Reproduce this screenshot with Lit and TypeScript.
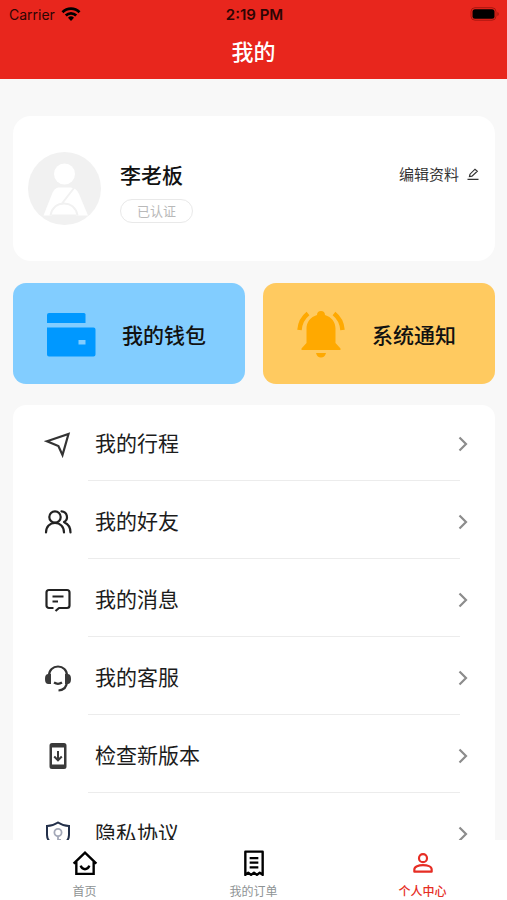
import { LitElement, html, css, svg } from "lit";
import { customElement, state } from "lit/decorators.js";
import { classMap } from "lit/directives/class-map.js";

const menuIcons = {
  trip: svg`<path d="M3 11.200 24.500 4 18.500 25 14.400 16Z" fill="none" stroke="#333" stroke-width="2.200" stroke-linejoin="miter"/>`,
  friends: svg`<g fill="none" stroke="#222" stroke-width="2.200" stroke-linecap="round">
    <circle cx="11" cy="9" r="5.700"/>
    <path d="M2 24.500c0-6 4-9.600 9-9.600s9 3.600 9 9.600"/>
    <path d="M17.500 3.300a5.700 5.700 0 0 1 2.500 10.700M20.500 14.500c3.500 1.500 6 5 6 10"/></g>`,
  message: svg`<path d="M9.500 22H5a2.500 2.500 0 0 1-2.500-2.500V6.500A2.500 2.500 0 0 1 5 4h18a2.500 2.500 0 0 1 2.500 2.500v13A2.500 2.500 0 0 1 23 22h-8l-3.500 3M8.500 10.500h11M8.500 15.500h5.500" fill="none" stroke="#222" stroke-width="2.200" stroke-linejoin="round"/>`,
  service: svg`<path d="M5 11.500C5 6 9 2.500 14 2.500S23 6 23 11.500M23 17c0 6-3 9-8.500 9.500M10 18.500c2.500 1.600 5.500 1.600 8 0" fill="none" stroke="#333" stroke-width="2.200"/>
    <path d="M7 10v10H4.500C2 20 1 18.500 1 15s1-5 3.500-5zM21 10v10h2.500c2.500 0 3.500-1.500 3.500-5s-1-5-3.500-5z" fill="#3a3a3a"/>`,
  update: svg`<path fill-rule="evenodd" d="M8 1h12a2.500 2.500 0 0 1 2.500 2.500v21A2.500 2.500 0 0 1 20 27H8a2.500 2.500 0 0 1-2.500-2.500v-21A2.500 2.500 0 0 1 8 1zM8 5.500v17h12v-17z" fill="#3a3a3a"/>
    <path d="M14 9v9M10.200 14.500 14 18.300l3.800-3.800" fill="none" stroke="#3a3a3a" stroke-width="2"/>`,
  privacy: svg`<path d="M14 2.500c3.500 2.300 7 3.400 11 3.500v9c0 5.500-4 9-11 12-7-3-11-6.500-11-12V6c4-.1 7.500-1.200 11-3.500z" fill="none" stroke="#23304a" stroke-width="2"/>
    <circle cx="14" cy="12.500" r="3.600" fill="none" stroke="#a3a8b8" stroke-width="1.800"/><path d="M14 16v6.500M14 20h3" stroke="#a3a8b8" stroke-width="1.800"/>`,
};

const menu: { label: string; icon: keyof typeof menuIcons }[] = [
  { label: "我的行程", icon: "trip" },
  { label: "我的好友", icon: "friends" },
  { label: "我的消息", icon: "message" },
  { label: "我的客服", icon: "service" },
  { label: "检查新版本", icon: "update" },
  { label: "隐私协议", icon: "privacy" },
];

const tabs = [
  {
    label: "首页",
    icon: svg`<path d="M1.500 12.500 12 2.500l10.500 10M4 10.500V22h16V10.500M8 14.500c.8 2.300 2.200 3.300 4 3.300s3.200-1 4-3.300" fill="none" stroke="currentColor" stroke-width="2.200"/>`,
  },
  {
    label: "我的订单",
    icon: svg`<path d="M4 23V1.500h16V23l-2.700-2-2.600 2-2.700-2-2.700 2-2.600-2zM8 7.500h8M8 11.700h8M8 16h8" fill="none" stroke="currentColor" stroke-width="2.200" stroke-linejoin="round"/>`,
  },
  {
    label: "个人中心",
    icon: svg`<circle cx="12" cy="7.500" r="3.700" fill="none" stroke="currentColor" stroke-width="2"/><path d="M4 20v-2c0-2.700 4-4 8-4s8 1.300 8 4v2z" fill="none" stroke="currentColor" stroke-width="2" stroke-linejoin="round"/>`,
  },
];

@customElement("app-root")
export class AppRoot extends LitElement {
  @state() private active = 2;

  static styles = css`
    :host {
      display: flex;
      flex-direction: column;
      height: 100vh;
      background: #f8f8f8;
      color: #1c1c1c;
      font-family: "Noto Sans CJK SC", sans-serif;
    }
    * { box-sizing: border-box; }
    button {
      font: inherit;
      color: inherit;
      border: 0;
      background: none;
      padding: 0;
      cursor: pointer;
    }
    svg { display: block; flex: none; }
    h1, h2, ul { margin: 0; padding: 0; }
    h1, h2 { font-weight: 500; }

    .top { flex: none; background: #e8261d; }
    .status {
      display: grid;
      grid-template-columns: 1fr auto 1fr;
      align-items: center;
      height: 28px;
      padding: 0 7px 0 9px;
      font-family: Inter, sans-serif;
      font-size: 14px;
      color: #2c0504;
    }
    .carrier { display: flex; align-items: center; gap: 6px; }
    .time { font-size: 15px; font-weight: 600; }
    .battery { justify-self: end; }
    .title {
      height: 51px;
      line-height: 45px;
      text-align: center;
      font-size: 22px;
      color: #fff;
    }

    .content {
      flex: 1;
      min-height: 0;
      overflow-y: auto;
      scrollbar-width: none;
      padding: 37px 12px 0 13px;
    }
    .profile {
      display: flex;
      align-items: flex-start;
      background: #fff;
      border-radius: 18px;
      padding: 36px 16px 36px 15px;
    }
    .who {
      flex: 1;
      display: flex;
      flex-direction: column;
      align-items: flex-start;
      gap: 10px;
      margin: 7px 0 0 19px;
    }
    .name { font-size: 21px; line-height: 30px; color: #111; }
    .badge {
      border: 1px solid #e9e9e9;
      border-radius: 12px;
      padding: 0 16px;
      font-size: 13px;
      line-height: 22px;
      color: #b9b9b9;
    }
    .edit {
      display: flex;
      align-items: center;
      gap: 8px;
      margin-top: 12px;
      font-size: 15px;
      line-height: 20px;
      color: #333;
    }

    .tiles {
      display: grid;
      grid-template-columns: 1fr 1fr;
      gap: 18px;
      margin: 22px 0 21px;
    }
    .tile {
      display: flex;
      align-items: center;
      height: 101px;
      gap: 26px;
      padding-left: 33px;
      border-radius: 13px;
      font-size: 21px;
      font-weight: 500;
      color: #111;
    }
    .wallet { background: #82cdff; }
    .notice { background: #ffca60; }

    .menu {
      list-style: none;
      background: #fff;
      border-radius: 13px 13px 0 0;
      padding: 1px 27px 20px 31px;
      display: flex;
      flex-direction: column;
      gap: 3px;
    }
    .item {
      display: grid;
      grid-template-columns: 44px 1fr 28px;
      width: 100%;
      height: 75px;
      align-items: center;
      font-size: 21px;
      text-align: left;
    }
    .label {
      height: 75px;
      line-height: 72px;
      margin-right: -20px;
      padding-left: 7px;
      border-bottom: 1px solid #ececec;
    }
    .chevron { justify-self: end; }

    .tabs {
      flex: none;
      display: grid;
      grid-template-columns: repeat(3, 1fr);
      height: 60px;
      background: #fff;
    }
    .tab {
      display: flex;
      flex-direction: column;
      align-items: center;
      padding-top: 10px;
      gap: 7px;
      color: #000;
      font-size: 12px;
      line-height: 16px;
    }
    .tab-label { color: #8e9394; }
    .tab.on, .tab.on .tab-label { color: #e62d24; }
    .tab.on .tab-label { font-weight: 500; }
  `;

  render() {
    return html`
      <header class="top">
        <div class="status">
          <span class="carrier">Carrier
            <svg width="20" height="14" viewBox="0 0 20 14" aria-hidden="true">
              <g fill="none" stroke="#000" stroke-width="2.800">
                <path d="M1.500 5.200a12 12 0 0 1 17 0"/><path d="M4.800 8.600a7.400 7.400 0 0 1 10.400 0"/>
              </g>
              <path d="M7 10.800a4.300 4.300 0 0 1 6 0L10 14z" fill="#000"/>
            </svg>
          </span>
          <span class="time">2:19 PM</span>
          <svg class="battery" width="30" height="14" viewBox="0 0 30 14" aria-hidden="true">
            <rect x="1" y=".7" width="25" height="12.500" rx="4" fill="none" stroke="#a8170f"/>
            <rect x="2.500" y="2.200" width="22" height="9.500" rx="2.500" fill="#000"/>
            <path d="M27.500 5v4c1.500-.5 1.500-3.500 0-4z" fill="#8e130d"/>
          </svg>
        </div>
        <h1 class="title">我的</h1>
      </header>

      <main class="content">
        <section class="profile">
          <svg width="73" height="73" viewBox="0 0 73 73" aria-hidden="true">
            <circle cx="36.500" cy="36.500" r="36.500" fill="#f1f1f1"/>
            <circle cx="36.500" cy="22" r="10.500" fill="#fff"/>
            <path d="M15.500 63.500 24 42c2-5 4-6.500 8-6.500h9c5 0 8 2 10 6.500l9 21.500z" fill="#fff"/>
            <path d="M46 36 34 51.500M22.500 63.500C24 55 30 51.500 36 51.500s12 3.500 13.500 12" fill="none" stroke="#f1f1f1" stroke-width="2"/>
            <path d="M24 63.500h24" stroke="#f1f1f1" stroke-width="2"/>
          </svg>
          <div class="who">
            <h2 class="name">李老板</h2>
            <span class="badge">已认证</span>
          </div>
          <button class="edit">编辑资料
            <svg width="12" height="12" viewBox="0 0 12 12" aria-hidden="true">
              <path d="M2.500 8.500 3 6.200 8 1.200 10.300 3.200 5 8.200zM.5 11.300h11" fill="none" stroke="#333" stroke-width="1.200"/>
            </svg>
          </button>
        </section>

        <div class="tiles">
          <button class="tile wallet">
            <svg width="50" height="50" viewBox="0 0 50 50" aria-hidden="true">
              <path d="M3 4h35q1.500 0 1.500 1.500V14H1V6q0-2 2-2z" fill="#0098ff"/>
              <path fill-rule="evenodd" d="M1 18.500h46.500q2 0 2 2v25q0 2-2 2H3q-2 0-2-2zM32.500 31v4.500h7V31z" fill="#0098ff"/>
            </svg>
            我的钱包
          </button>
          <button class="tile notice">
            <svg width="50" height="50" viewBox="0 0 50 50" aria-hidden="true">
              <path d="M25 2c2.500 0 4 1.500 4 4 6.500 2 10.500 7 10.500 13.500V34l5 5.500V41h-39v-1.500l5-5.500V19.500C10.500 13 14.500 8 21 6c0-2.500 1.500-4 4-4zM20 44h10c-.8 3-2.500 4.500-5 4.500S20.800 47 20 44z" fill="#ffa900"/>
              <path d="M12 4.500C7 8.500 4 14 3.500 21M38 4.500C43 8.500 46 14 46.500 21" fill="none" stroke="#ffa900" stroke-width="4.500"/>
            </svg>
            系统通知
          </button>
        </div>

        <ul class="menu">
          ${menu.map(
            (m) => html`<li>
              <button class="item">
                <svg width="28" height="28" viewBox="0 0 28 28" aria-hidden="true">${menuIcons[m.icon]}</svg>
                <span class="label">${m.label}</span>
                <svg class="chevron" width="10" height="16" viewBox="0 0 10 16" aria-hidden="true">
                  <path d="M1.500 1.500 8 8l-6.500 6.500" fill="none" stroke="#8c8c8c" stroke-width="2.200"/>
                </svg>
              </button>
            </li>`
          )}
        </ul>
      </main>

      <nav class="tabs">
        ${tabs.map(
          (t, i) => html`<button
            class=${classMap({ tab: true, on: i === this.active })}
            @click=${() => (this.active = i)}
          >
            <svg width="26" height="26" viewBox="0 0 24 24" aria-hidden="true">${t.icon}</svg>
            <span class="tab-label">${t.label}</span>
          </button>`
        )}
      </nav>
    `;
  }
}
